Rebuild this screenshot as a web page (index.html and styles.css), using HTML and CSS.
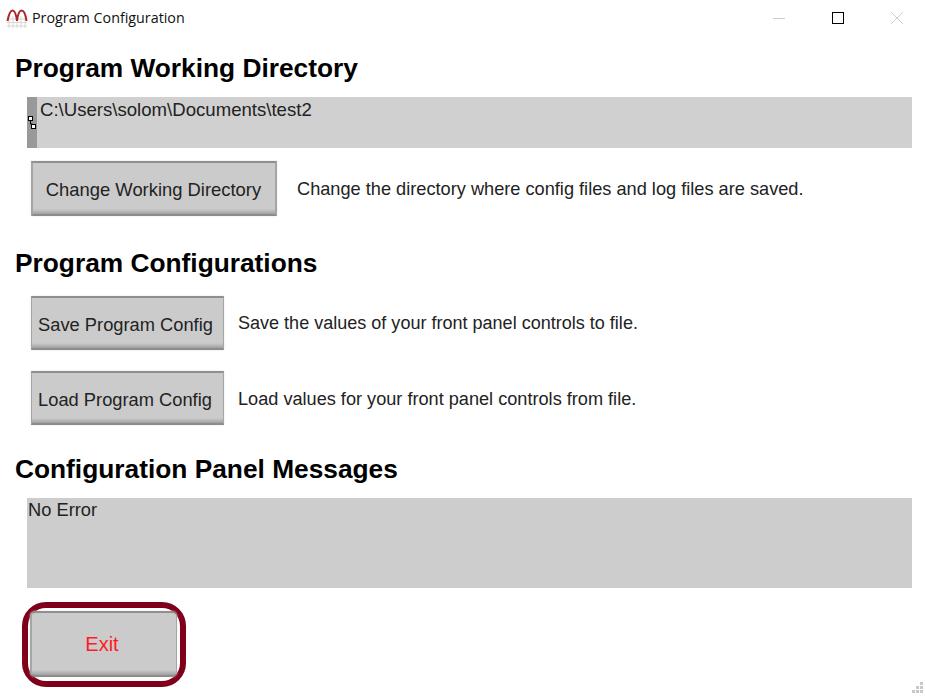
FILE: index.html
```html
<!DOCTYPE html>
<html lang="en">
<head>
<meta charset="utf-8">
<title>Program Configuration</title>
<link rel="stylesheet" href="styles.css">
</head>
<body>
<div class="window">
  <header class="titlebar">
    <svg class="app-icon" width="22" height="20" viewBox="0 0 22 20">
      <path class="grid" d="M3 4v16M7 8v12M11 4v16M15 8v12M19 4v16M1 11h20M1 14.500h20M1 18h20"/>
      <path class="wave" d="M1.500 13C3 5 4.500 2.500 6.500 2.500S10 5 11 13C12 5 13.500 2.500 15.500 2.500S19.500 5 20.500 13"/>
    </svg>
    <span class="title">Program Configuration</span>
    <div class="win-controls">
      <svg class="win-btn" width="14" height="14" viewBox="0 0 14 14"><path class="dim" d="M1 7.500h12"/></svg>
      <svg class="win-btn" width="14" height="14" viewBox="0 0 14 14"><rect class="max" x="1.500" y="1.500" width="11" height="11"/></svg>
      <svg class="win-btn" width="14" height="14" viewBox="0 0 14 14"><path class="dim" d="M1 1l12 12M13 1L1 13"/></svg>
    </div>
  </header>

  <main class="content">
    <h2 class="heading heading-first">Program Working Directory</h2>
    <div class="path-box">
      <div class="path-strip">
        <svg width="9" height="14" viewBox="0 0 9 14"><path class="browse-line" d="M3.500 5v3h2v2"/><rect class="browse" x="1.500" y="0.500" width="4" height="4"/><rect class="browse" x="4.500" y="8.500" width="4" height="4"/></svg>
      </div>
      <div class="path-text">C:\Users\solom\Documents\test2</div>
    </div>
    <div class="row row-wd">
      <button class="btn btn-wd">Change Working Directory</button>
      <span class="desc desc-wd">Change the directory where config files and log files are saved.</span>
    </div>

    <h2 class="heading heading-configs">Program Configurations</h2>
    <div class="row row-save">
      <button class="btn btn-cfg">Save Program Config</button>
      <span class="desc">Save the values of your front panel controls to file.</span>
    </div>
    <div class="row row-load">
      <button class="btn btn-cfg btn-load">Load Program Config</button>
      <span class="desc desc-load">Load values for your front panel controls from file.</span>
    </div>

    <h2 class="heading heading-msgs">Configuration Panel Messages</h2>
    <div class="msg-box">No Error</div>

    <div class="exit-ring">
      <button class="btn btn-exit">Exit</button>
    </div>
  </main>

  <svg class="grip" width="12" height="12" viewBox="0 0 12 12">
    <path d="M8 0h3v3H8zM4 4h3v3H4zM8 4h3v3H8zM0 8h3v3H0zM4 8h3v3H4zM8 8h3v3H8z"/>
  </svg>
</div>
</body>
</html>
```
FILE: styles.css
```css
* { box-sizing: border-box; }
html, body { margin: 0; padding: 0; background: #fff; }
body { font-family: "Liberation Sans", Arial, sans-serif; color: #1a1a1a; }
.window { position: relative; width: 925px; height: 697px; overflow: hidden; background: #fff; }

.titlebar { display: flex; align-items: center; height: 36px; padding-left: 6px; }
.app-icon { flex: none; }
.grid { fill: none; stroke: #d8d8d8; stroke-width: 1; }
.wave { fill: none; stroke: #a8282c; stroke-width: 2; }
.title { margin: -2px 0 0 4px; font: 14.300px "Open Sans", "Noto Sans", sans-serif; color: #111; }
.win-controls { margin-left: auto; display: flex; padding-right: 21px; gap: 45px; }
.win-btn { display: block; }
.dim { fill: none; stroke: #cfcfcf; stroke-width: 1; }
.max { fill: none; stroke: #000; stroke-width: 1; }

.content { padding: 0 13px 0 15px; }
.heading { margin: 0; font-size: 26.300px; line-height: 30px; font-weight: 700; color: #000; }
.heading-first { margin-top: 17px; }
.heading-configs { margin-top: 32px; }
.heading-msgs { margin-top: 29px; }

.path-box { display: flex; height: 51px; margin: 14px 0 0 12px; background: #d0d0d0; }
.path-strip { flex: none; width: 10px; background: #999; display: flex; align-items: center; }
.browse { fill: #fff; stroke: #000; stroke-width: 1; }
.browse-line { fill: none; stroke: #000; stroke-width: 1; }
.path-text { margin: 1px 0 0 3px; font-size: 18.600px; line-height: 24px; color: #222; }

.row { display: flex; align-items: center; margin-left: 16px; }
.row-wd { margin-top: 13px; }
.row-save { margin-top: 18px; }
.row-load { margin-top: 21px; }

.btn {
  display: block; flex: none; padding: 3px 4px 0 0;
  border: 1px solid #a6a6a6;
  border-top: 2px solid #8f8f8f;
  border-bottom: 2px solid #8c8c8c;
  background: linear-gradient(#cbcbcb, #cbcbcb calc(100% - 5px), #a9a9a9 calc(100% - 1px), #a0a0a0);
  font-family: "Liberation Sans", Arial, sans-serif;
  font-size: 18.300px; color: #222;
  box-shadow: 0 0 2px #e4e4e4;
}
.btn-wd { width: 246px; height: 55px; padding-right: 1px; border-left-width: 2px; border-right-width: 2px; font-size: 18.400px; }
.btn-cfg { width: 193px; height: 54px; }
.btn-load { padding: 4px 5px 0 0; }
.desc { margin-left: 14px; font-size: 18.050px; color: #222; }
.desc-wd { margin-left: 20px; padding-top: 1px; font-size: 18.200px; }
.desc-load { padding-top: 2px; font-size: 18.150px; }

.msg-box { height: 90px; margin: 14px 0 0 12px; padding-left: 1px; background: #cdcdcd; font-size: 18.300px; line-height: 24px; color: #222; }

.exit-ring {
  width: 164px; height: 85px; margin: 14px 0 0 7px; padding: 3px 0 0 2px;
  border: 6px solid #80001c; border-radius: 24px;
}
.btn-exit { width: 147px; height: 66px; border-radius: 5px; padding: 0 4px 0 0; border-left-width: 2px; color: #ff1a26; font-size: 20px; }

.grip { position: absolute; right: 1px; bottom: 3px; fill: #c8c8c8; }
```
